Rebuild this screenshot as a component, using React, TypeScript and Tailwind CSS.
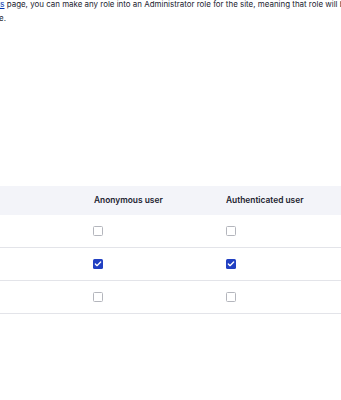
import { Check } from "lucide-react";

const roles = ["Anonymous user", "Authenticated user"];

const rows: boolean[][] = [
    [false, false],
    [true, true],
    [false, false],
];

function Box({ checked }: { checked: boolean }) {
    if (checked) {
        return (
            <span className="flex h-[10px] w-[10px] items-center justify-center rounded-[1.5px] bg-[#2140c2]">
                <Check className="h-[8px] w-[8px] text-white" strokeWidth={4} />
            </span>
        );
    }
    return (
        <span className="block h-[10px] w-[10px] rounded-[1.5px] border border-[#b4b6bd] bg-white" />
    );
}

export default function App() {
    return (
        <div className="h-[400px] w-[341px] overflow-hidden bg-white font-['Inter',sans-serif] text-[#222330]">
            <div className="-mt-[2px] overflow-hidden text-[7.95px] leading-[13.5px]">
                <p className="whitespace-nowrap">
                    <a href="#" className="-ml-[25px] inline-block text-[#0036b1] underline">
                        settings
                    </a>{" "}
                    page, you can make any role into an Administrator role for the site, meaning that role will be
                    automatically granted all new permissions.
                </p>
                <p className="whitespace-nowrap">
                    <span className="-ml-[1px] inline-block">e.</span>
                </p>
            </div>

            <div className="mt-[161px]">
                <div className="grid h-[29px] grid-cols-[94px_132px_1fr] items-center bg-[#f3f4f9] text-[8.4px] font-semibold">
                    <span />
                    {roles.map((r) => (
                        <span key={r}>{r}</span>
                    ))}
                </div>
                {rows.map((row, i) => (
                    <div
                        key={i}
                        className="grid h-[33px] grid-cols-[93px_133px_1fr] items-center border-b border-[#e3e4e9]"
                    >
                        <span />
                        {row.map((c, j) => (
                            <Box key={j} checked={c} />
                        ))}
                    </div>
                ))}
            </div>
        </div>
    );
}
